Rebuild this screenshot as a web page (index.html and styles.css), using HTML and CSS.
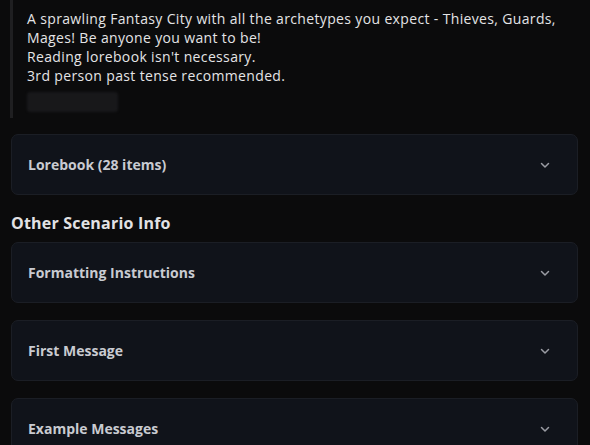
FILE: index.html
```html
<!DOCTYPE html>
<html lang="en">
<head>
    <meta charset="UTF-8">
    <meta name="viewport" content="width=device-width, initial-scale=1.0">
    <title>Scenario</title>
    <link rel="stylesheet" href="styles.css">
</head>
<body>
    <div class="page">
        <div class="description">
            <p>A sprawling Fantasy City with all the archetypes you expect - Thieves, Guards, Mages! Be anyone you want to be!</p>
            <p>Reading lorebook isn't necessary.</p>
            <p>3rd person past tense recommended.</p>
            <div class="hidden-line"></div>
        </div>

        <div class="panel">
            <span class="panel-title">Lorebook (28 items)</span>
            <svg class="chevron" width="12" height="12" viewBox="0 0 12 12"><path d="M2.5 4.5 6 8l3.5-3.5"/></svg>
        </div>

        <h2 class="section-title">Other Scenario Info</h2>

        <div class="panel">
            <span class="panel-title">Formatting Instructions</span>
            <svg class="chevron" width="12" height="12" viewBox="0 0 12 12"><path d="M2.5 4.5 6 8l3.5-3.5"/></svg>
        </div>
        <div class="panel">
            <span class="panel-title">First Message</span>
            <svg class="chevron" width="12" height="12" viewBox="0 0 12 12"><path d="M2.5 4.5 6 8l3.5-3.5"/></svg>
        </div>
        <div class="panel">
            <span class="panel-title">Example Messages</span>
            <svg class="chevron" width="12" height="12" viewBox="0 0 12 12"><path d="M2.5 4.5 6 8l3.5-3.5"/></svg>
        </div>
    </div>
</body>
</html>
```

FILE: styles.css
```css
*{
    padding: 0;
    margin: 0;
    box-sizing: border-box;
}
body{
    background-color: #0b0b0c;
    font-family: "Open Sans", "DejaVu Sans", sans-serif;
    color: #e6e6e8;
    overflow: hidden;
}
.page{
    padding: 0 12px 0 11px;
}
.description{
    border-left: 3px solid #1f1f21;
    margin-left: -1px;
    padding: 9px 0 6px 14px;
    font-size: 14px;
    line-height: 19px;
    letter-spacing: 0.35px;
    color: #e4e4e6;
}
.hidden-line{
    width: 91px;
    height: 20px;
    margin-top: 7px;
    background-color: #18181a;
    border-radius: 3px;
    filter: blur(1px);
}
.panel{
    display: flex;
    align-items: center;
    justify-content: space-between;
    height: 61px;
    margin-top: 17px;
    padding: 0 26px 0 16px;
    background-color: #10131a;
    border: 1px solid #1b1e25;
    border-radius: 7px;
}
.description + .panel{
    margin-top: 16px;
}
.panel-title{
    font-size: 14px;
    font-weight: 700;
    line-height: 19px;
    color: #c9cbd1;
}
.chevron{
    fill: none;
    stroke: #9a9ca3;
    stroke-width: 1.5;
    stroke-linecap: round;
    stroke-linejoin: round;
}
.section-title{
    margin: 17px 0 8px;
    font-size: 16px;
    font-weight: 700;
    line-height: 22px;
    letter-spacing: 0.2px;
    color: #e2e2e4;
}
.section-title + .panel{
    margin-top: 0;
}
```
